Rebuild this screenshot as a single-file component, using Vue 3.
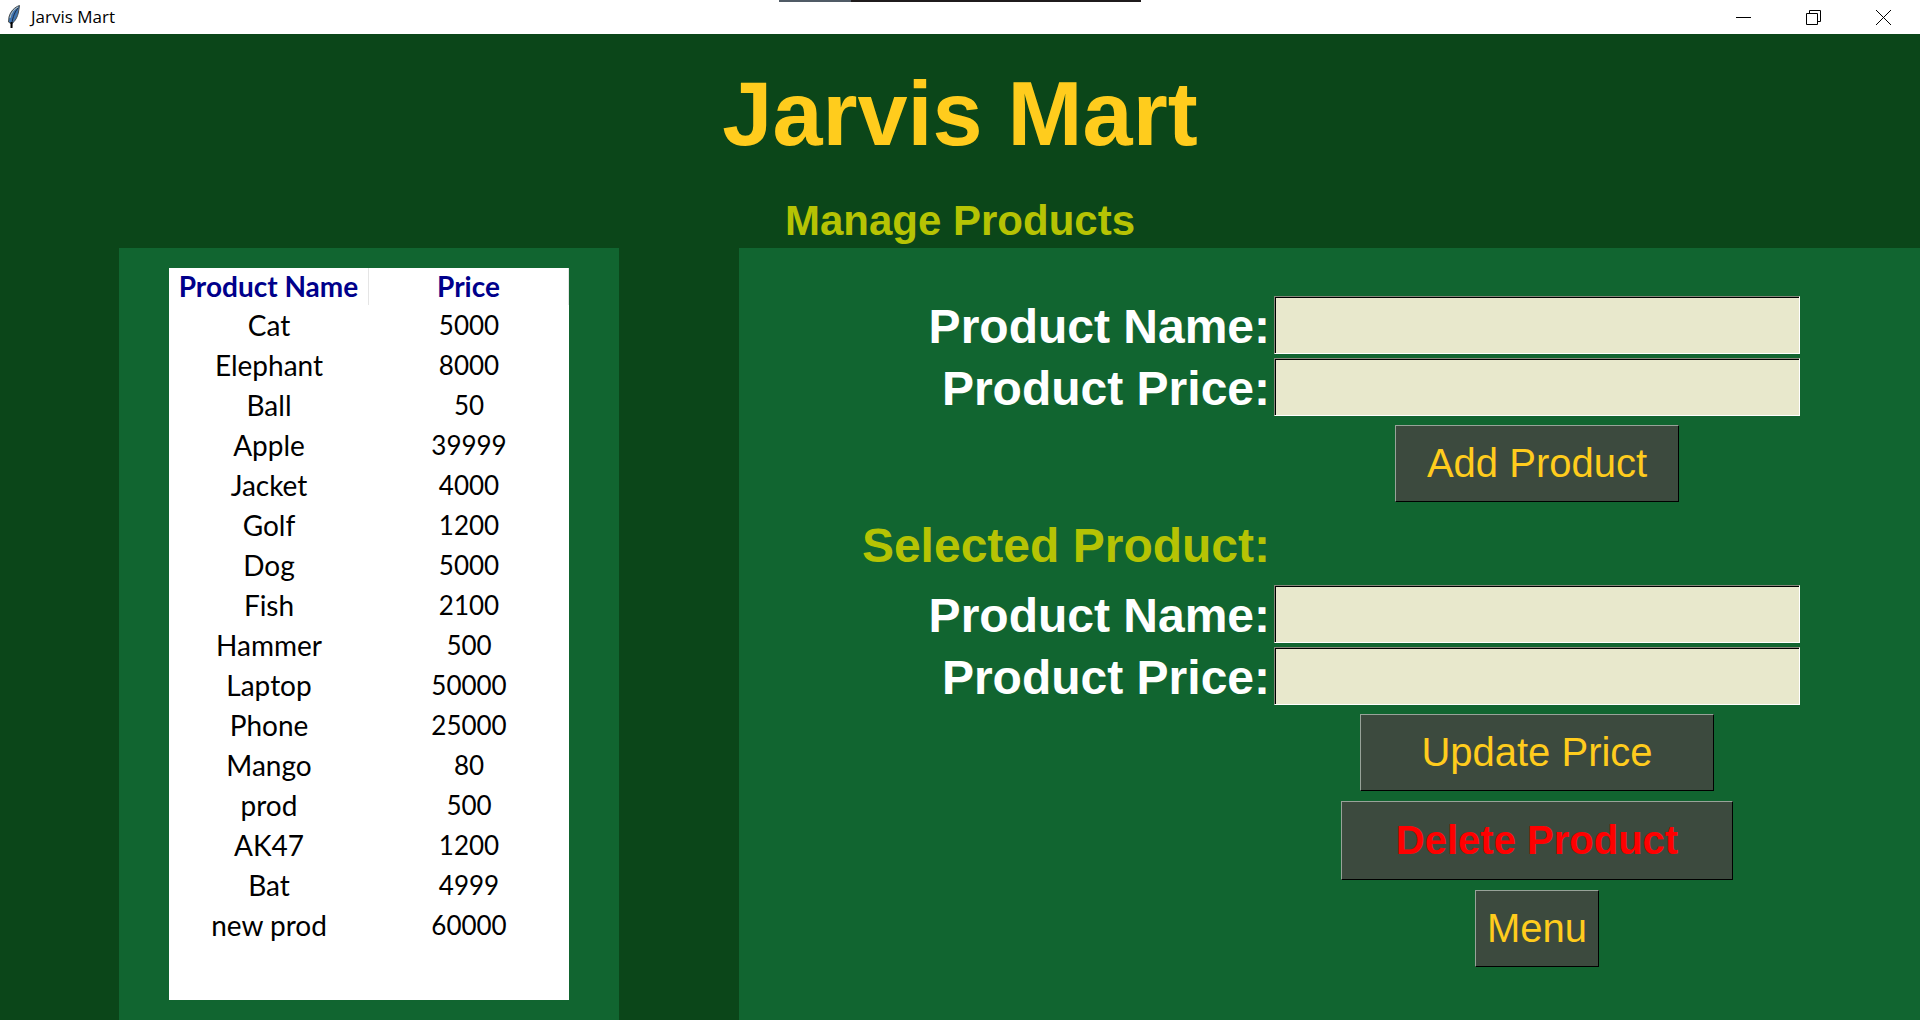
<script setup>
import { ref } from 'vue'

const products = [
  ['Cat', 5000],
  ['Elephant', 8000],
  ['Ball', 50],
  ['Apple', 39999],
  ['Jacket', 4000],
  ['Golf', 1200],
  ['Dog', 5000],
  ['Fish', 2100],
  ['Hammer', 500],
  ['Laptop', 50000],
  ['Phone', 25000],
  ['Mango', 80],
  ['prod', 500],
  ['AK47', 1200],
  ['Bat', 4999],
  ['new prod', 60000],
]

const newName = ref('')
const newPrice = ref('')
const selectedName = ref('')
const selectedPrice = ref('')
</script>

<template>
  <div class="window">
    <div class="title-bar">
      <svg class="feather" width="14" height="24" viewBox="0 0 14 24" aria-hidden="true">
        <path d="M12.500 .5C8 2 3.500 6 2 12l-.5 5 3 2c4-3 6-7 7-12z" fill="#3f74b0" stroke="#4a4f4f" />
        <path d="M11 2C7 4 4 8 3 13" fill="none" stroke="#b9c0bd" />
        <path d="M11 3C7 8 5 14 4.500 23" fill="none" stroke="#1b2c44" />
        <path d="M4.500 17v6" fill="none" stroke="#000" stroke-width="2" />
      </svg>
      <span class="caption">Jarvis Mart</span>
      <div class="controls">
        <button type="button" aria-label="Minimize">
          <svg width="15" height="15" viewBox="0 0 15 15"><path d="M0 7.500h15" stroke="#000" /></svg>
        </button>
        <button type="button" aria-label="Restore">
          <svg width="15" height="15" viewBox="0 0 15 15" fill="none" stroke="#000">
            <path d="M.5 3.500h11v11H.5zM3.500 3.500V.5h11v11h-3" />
          </svg>
        </button>
        <button type="button" aria-label="Close">
          <svg width="15" height="15" viewBox="0 0 15 15"><path d="M0 0l15 15M15 0L0 15" stroke="#000" /></svg>
        </button>
      </div>
      <div class="top-strip"></div>
    </div>

    <header class="heading">
      <h1>Jarvis Mart</h1>
      <h2>Manage Products</h2>
    </header>

    <main class="content">
      <section class="list-panel">
        <div class="sheet">
          <table>
            <thead>
              <tr>
                <th>Product Name</th>
                <th>Price</th>
              </tr>
            </thead>
            <tbody>
              <tr v-for="[name, price] in products" :key="name">
                <td class="name">{{ name }}</td>
                <td>{{ price }}</td>
              </tr>
            </tbody>
          </table>
        </div>
      </section>

      <form class="form-panel" @submit.prevent>
        <label for="new-name">Product Name:</label>
        <input id="new-name" v-model="newName" type="text" />
        <label for="new-price">Product Price:</label>
        <input id="new-price" v-model="newPrice" type="text" />
        <button type="button" class="action add">Add Product</button>

        <h3>Selected Product:</h3>
        <label for="selected-name">Product Name:</label>
        <input id="selected-name" v-model="selectedName" type="text" />
        <label for="selected-price">Product Price:</label>
        <input id="selected-price" v-model="selectedPrice" type="text" />
        <button type="button" class="action update">Update Price</button>
        <button type="button" class="action delete">Delete Product</button>
        <button type="button" class="action menu">Menu</button>
      </form>
    </main>
  </div>
</template>

<style>
body {
  margin: 0;
  background: #0b4619;
}
</style>

<style scoped>
.window {
  display: flex;
  flex-direction: column;
  min-height: 100vh;
  background: #0b4619;
  font-family: "Liberation Sans", Arial, sans-serif;
}

.title-bar {
  position: relative;
  display: flex;
  align-items: center;
  height: 34px;
  padding: 0 2px 0 7px;
  background: #fff;
}

.caption {
  margin-left: 10px;
  color: #000;
  font: 17px/22px "Open Sans", "Noto Sans", sans-serif;
}

.controls {
  display: flex;
  margin-left: auto;
}

.controls button {
  display: flex;
  align-items: center;
  justify-content: center;
  width: 70px;
  height: 34px;
  padding: 0;
  border: 0;
  background: none;
}

.top-strip {
  position: absolute;
  top: 0;
  left: 50%;
  width: 362px;
  height: 2px;
  transform: translateX(-50%);
  background: linear-gradient(to right, #505b66 72px, #1f1b1c 72px);
}

.heading {
  display: flex;
  flex-direction: column;
  gap: 31px;
  padding: 28px 0 3px;
  text-align: center;
}

h1,
h2,
h3 {
  margin: 0;
  font-weight: bold;
}

h1 {
  color: #ffcc1d;
  font-size: 90px;
  line-height: 104px;
}

h2 {
  color: #b6c304;
  font-size: 42px;
  line-height: 48px;
}

.content {
  display: flex;
  flex: 1;
  gap: 120px;
  padding-left: 119px;
}

.list-panel {
  display: flex;
  flex: none;
  box-sizing: border-box;
  width: 500px;
  padding: 20px 50px;
  background: #116530;
}

.sheet {
  flex: 1;
  background: #fff;
}

table {
  width: 100%;
  border-collapse: separate;
  border-spacing: 0;
  table-layout: fixed;
  color: #000;
  font-family: Lato, Carlito, Calibri, sans-serif;
  font-size: 26px;
  text-align: center;
}

th {
  height: 37px;
  padding: 0;
  border-right: 1px solid #e5e5e5;
  color: #00008b;
  font-size: 28px;
  font-weight: bold;
  line-height: 37px;
  white-space: nowrap;
  box-sizing: border-box;
}

td {
  height: 40px;
  padding: 0;
  line-height: 40px;
}

.name {
  font-size: 28px;
}

.form-panel {
  display: grid;
  flex: 1;
  grid-template-columns: 1fr 526px;
  column-gap: 4px;
  align-content: start;
  padding: 48px 120px 48px 0;
  background: #116530;
}

label,
h3 {
  grid-column: 1;
  font-size: 48px;
  font-weight: bold;
  line-height: 62px;
  text-align: right;
  white-space: nowrap;
}

label {
  color: #fff;
}

h3 {
  margin: 8px 0;
  color: #b6c304;
}

input {
  box-sizing: border-box;
  width: 100%;
  height: 58px;
  padding: 0 8px;
  border: 1px solid;
  border-color: #86867a #fff #fff #86867a;
  border-radius: 0;
  outline: none;
  background: #e8e8cc;
  box-shadow: inset 1px 1px #000;
  color: #000;
  font: 40px "Liberation Sans", Arial, sans-serif;
}

.action {
  grid-column: 2;
  justify-self: center;
  box-sizing: border-box;
  height: 77px;
  margin: 5px 0;
  padding: 0;
  border: 1px solid;
  border-color: #98a399 #000 #000 #98a399;
  border-radius: 0;
  background: #3c4a3e;
  color: #ffcc1d;
  font: 40px "Liberation Sans", Arial, sans-serif;
}

.add {
  width: 284px;
}

.update {
  width: 354px;
}

.delete {
  width: 392px;
  height: 79px;
  color: #f00;
  font-weight: bold;
}

.menu {
  width: 124px;
}
</style>
